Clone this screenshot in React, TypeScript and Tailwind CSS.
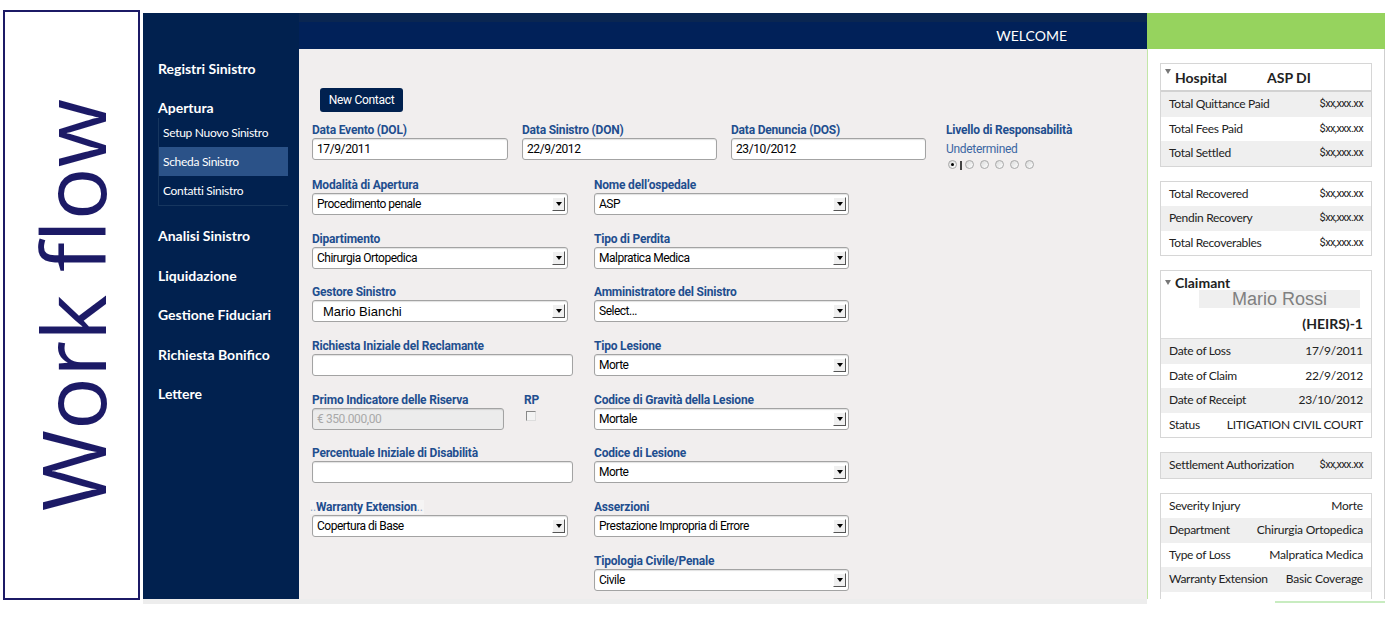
import React from 'react';

const narrow = { fontFamily: 'Roboto, "Liberation Sans", sans-serif' };
const ui = { fontFamily: 'Lato, "Noto Sans", sans-serif' };
const arial = { fontFamily: '"Liberation Sans", Arial, sans-serif' };

const Arrow = () => (
  <span className="flex h-[14px] w-[13px] shrink-0 items-center justify-center border border-t-white border-l-white border-r-[#555] border-b-[#555] bg-[#f0f0f0]">
    <span className="h-0 w-0 border-x-[3px] border-t-[4px] border-x-transparent border-t-black" />
  </span>
);

const Label = ({ children, className = '' }: { children: React.ReactNode; className?: string }) => (
  <div
    className={'h-[14px] text-[12px] font-bold leading-[14px] tracking-[-0.2px] text-[#1f4e8f] whitespace-nowrap ' + className}
    style={narrow}
  >
    {children}
  </div>
);

const TextBox = ({ value = '', width, disabled = false }: { value?: string; width: number; disabled?: boolean }) => (
  <div
    className={
      'mt-[1px] flex h-[22px] items-center rounded-[3px] border border-[#a3a3a3] pl-[4px] text-[12px] tracking-[-0.4px] shadow-[inset_0_1px_1px_rgba(0,0,0,0.12)] ' +
      (disabled ? 'bg-[#ececec] text-[#a9a9a9]' : 'bg-white text-black')
    }
    style={{ ...narrow, width }}
  >
    {value}
  </div>
);

const Select = ({ value, wide = false, plain = false }: { value: string; wide?: boolean; plain?: boolean }) => (
  <div
    className={
      'mt-[1px] flex h-[22px] items-center justify-between rounded-[3px] border border-[#a3a3a3] bg-white pr-[2px] text-black shadow-[inset_0_1px_1px_rgba(0,0,0,0.12)] ' +
      (wide ? 'w-[256px]' : 'w-[255px]')
    }
  >
    {plain ? (
      <span className="pl-[10px] text-[13px]" style={arial}>{value}</span>
    ) : (
      <span className="pl-[4px] text-[12px] tracking-[-0.5px]" style={narrow}>{value}</span>
    )}
    <Arrow />
  </div>
);

const Radio = ({ on = false }: { on?: boolean }) => (
  <span className="flex h-[9px] w-[9px] items-center justify-center rounded-full border border-[#a8a8a8] bg-gradient-to-br from-[#d9d9d9] to-white">
    {on && <span className="h-[3px] w-[3px] rounded-full bg-black" />}
  </span>
);

const Row = ({ l, v, grey = false, narrowVal = false }: { l: string; v: string; grey?: boolean; narrowVal?: boolean }) => (
  <div className={'flex h-[24.5px] items-center justify-between pl-[8px] pr-[8px] text-[12px] text-[#222] ' + (grey ? 'bg-[#efefef]' : 'bg-white')}>
    <span className="tracking-[-0.3px]" style={ui}>{l}</span>
    {narrowVal ? (
      <span className="text-[11px] tracking-[-0.6px]" style={narrow}>{v}</span>
    ) : (
      <span className="tracking-[-0.2px]" style={ui}>{v}</span>
    )}
  </div>
);

const Tri = () => <span className="mr-[4px] h-0 w-0 self-start mt-[5px] border-x-[3px] border-t-[5px] border-x-transparent border-t-[#777]" />;

const money = '$xx,xxx.xx';

const NavItem = ({ children }: { children: React.ReactNode }) => (
  <div className="h-[20px] text-[14px] font-bold leading-[20px] text-white" style={ui}>{children}</div>
);

export default function App() {
  return (
    <div className="flex h-[624px] w-[1393px] items-start overflow-hidden bg-white">
      {/* Work flow box */}
      <div className="ml-[3px] mt-[10px] flex h-[590px] w-[137px] items-center justify-center border-2 border-[#1c1a66]">
        <span
          className="rotate-180 whitespace-nowrap text-[88px] leading-none text-[#1c1a66] [writing-mode:vertical-rl]"
          style={{ fontFamily: '"Open Sans", sans-serif' }}
        >
          Work flow
        </span>
      </div>

      {/* App */}
      <div className="ml-[3px] mt-[13px] flex flex-col">
        <div className="flex h-[586px] w-[1242px]">
          {/* Sidebar */}
          <div className="flex w-[156px] flex-col bg-[#01214f] pl-[15px] pt-[46px]">
            <NavItem>Registri Sinistro</NavItem>
            <div className="mt-[19px]">
              <NavItem>Apertura</NavItem>
            </div>
            <div className="w-[130px] border-b border-l border-[#16365f] text-[12px] tracking-[-0.3px] text-white" style={ui}>
              <div className="flex h-[29px] items-center pl-[4px]">Setup Nuovo Sinistro</div>
              <div className="flex h-[29px] items-center bg-[#2b5288] pl-[4px]">Scheda Sinistro</div>
              <div className="flex h-[29px] items-center pl-[4px]">Contatti Sinistro</div>
            </div>
            <div className="mt-[20px] flex flex-col gap-[19.6px]">
              <NavItem>Analisi Sinistro</NavItem>
              <NavItem>Liquidazione</NavItem>
              <NavItem>Gestione Fiduciari</NavItem>
              <NavItem>Richiesta Bonifico</NavItem>
              <NavItem>Lettere</NavItem>
            </div>
          </div>

          {/* Center */}
          <div className="flex w-[848px] flex-col">
            <div className="flex h-[36px] shrink-0 items-center justify-end border-t-[9px] border-[#0a2651] bg-[#012159] pr-[80px]">
              <span className="mt-[-1px] text-[14px] text-white" style={ui}>WELCOME</span>
            </div>
            <div className="flex-1 bg-[#f1eeee] pl-[13px] pt-[37px]">
              <button
                className="ml-[8px] h-[24px] w-[83px] rounded-[3px] bg-[#01214f] text-[12px] tracking-[-0.3px] text-white"
                style={narrow}
              >
                New Contact
              </button>

              {/* Row 1 */}
              <div className="mt-[11px] flex h-[37px]">
                <div>
                  <Label>Data Evento (DOL)</Label>
                  <TextBox value="17/9/2011" width={196} />
                </div>
                <div className="ml-[14px]">
                  <Label>Data Sinistro (DON)</Label>
                  <TextBox value="22/9/2012" width={195} />
                </div>
                <div className="ml-[14px]">
                  <Label>Data Denuncia (DOS)</Label>
                  <TextBox value="23/10/2012" width={195} />
                </div>
                <div className="ml-[20px]">
                  <Label>Livello di Responsabilità</Label>
                  <div className="mt-[5px] text-[12px] leading-[14px] tracking-[-0.3px] text-[#3b66a3]" style={narrow}>
                    Undetermined
                  </div>
                  <div className="ml-[2px] mt-[3px] flex items-center">
                    <Radio on />
                    <span className="ml-[3px] mt-[2px] h-[9px] w-[2px] bg-[#444]" />
                    <span className="ml-[3px] flex gap-[6px]">
                      <Radio />
                      <Radio />
                      <Radio />
                      <Radio />
                      <Radio />
                    </span>
                  </div>
                </div>
              </div>

              {/* Two-column grid */}
              <div className="mt-[18px] flex flex-col gap-[16.7px]">
                <div className="flex">
                  <div className="w-[282px]">
                    <Label>Modalità di Apertura</Label>
                    <Select value="Procedimento penale" wide />
                  </div>
                  <div>
                    <Label>Nome dell’ospedale</Label>
                    <Select value="ASP" />
                  </div>
                </div>
                <div className="flex">
                  <div className="w-[282px]">
                    <Label>Dipartimento</Label>
                    <Select value="Chirurgia Ortopedica" wide />
                  </div>
                  <div>
                    <Label>Tipo di Perdita</Label>
                    <Select value="Malpratica Medica" />
                  </div>
                </div>
                <div className="flex">
                  <div className="w-[282px]">
                    <Label>Gestore Sinistro</Label>
                    <Select value="Mario Bianchi" wide plain />
                  </div>
                  <div>
                    <Label>Amministratore del Sinistro</Label>
                    <Select value="Select..." />
                  </div>
                </div>
                <div className="flex">
                  <div className="w-[282px]">
                    <Label>Richiesta Iniziale del Reclamante</Label>
                    <TextBox width={261} />
                  </div>
                  <div>
                    <Label>Tipo Lesione</Label>
                    <Select value="Morte" />
                  </div>
                </div>
                <div className="flex">
                  <div className="flex w-[282px]">
                    <div>
                      <Label>Primo Indicatore delle Riserva</Label>
                      <TextBox value="€ 350.000,00" width={192} disabled />
                    </div>
                    <div className="ml-[20px]">
                      <Label>RP</Label>
                      <div className="ml-[2px] mt-[4px] h-[10px] w-[10px] border border-t-[#888] border-l-[#888] border-r-[#ddd] border-b-[#ddd] bg-[#f3f3f3]" />
                    </div>
                  </div>
                  <div>
                    <Label>Codice di Gravità della Lesione</Label>
                    <Select value="Mortale" />
                  </div>
                </div>
                <div className="flex">
                  <div className="w-[282px]">
                    <Label>Percentuale Iniziale di Disabilità</Label>
                    <TextBox width={261} />
                  </div>
                  <div>
                    <Label>Codice di Lesione</Label>
                    <Select value="Morte" />
                  </div>
                </div>
                <div className="flex">
                  <div className="w-[282px]">
                    <Label className="ml-[-2px] w-[114px] bg-[#f5f4f4]">
                      <span className="font-normal text-[#8ea3c4]">..</span>Warranty Extension<span className="font-normal text-[#8ea3c4]">..</span>
                    </Label>
                    <Select value="Copertura di Base" wide />
                  </div>
                  <div>
                    <Label>Asserzioni</Label>
                    <Select value="Prestazione Impropria di Errore" />
                  </div>
                </div>
                <div className="flex">
                  <div className="w-[282px]" />
                  <div>
                    <Label>Tipologia Civile/Penale</Label>
                    <Select value="Civile" />
                  </div>
                </div>
              </div>
            </div>
          </div>

          {/* Right panel */}
          <div className="flex w-[238px] flex-col">
            <div className="h-[36px] shrink-0 bg-[#96d35e]" />
            <div className="h-[554px] overflow-hidden border-l border-r border-l-[#c3e6a8] border-r-[#cfcfcf] bg-white pl-[12px] pr-[12px] pt-[14px]">
              <div className="flex flex-col gap-[14px]">
                <div className="border border-[#d6d6d6]">
                  <div className="flex h-[28px] items-center border-b-2 border-[#d2d2d2] pl-[4px] text-[14px] font-bold text-[#222]" style={ui}>
                    <Tri />
                    <span className="w-[92px]">Hospital</span>
                    <span>ASP DI</span>
                  </div>
                  <Row l="Total Quittance Paid" v={money} grey narrowVal />
                  <Row l="Total Fees Paid" v={money} narrowVal />
                  <Row l="Total Settled" v={money} grey narrowVal />
                </div>
                <div className="border border-[#d6d6d6]">
                  <Row l="Total Recovered" v={money} narrowVal />
                  <Row l="Pendin Recovery" v={money} grey narrowVal />
                  <Row l="Total Recoverables" v={money} narrowVal />
                </div>
                <div className="border border-[#d6d6d6]">
                  <div className="flex h-[19px] items-center pl-[4px] pt-[4px] text-[14px] font-bold leading-[16px] text-[#222]" style={ui}>
                    <Tri />
                    <span>Claimant</span>
                  </div>
                  <div className="ml-[38px] mr-[11px] flex h-[18px] items-center justify-center bg-[#efefef] text-[18px] text-[#808080]" style={arial}>
                    Mario Rossi
                  </div>
                  <div className="flex h-[31px] items-center justify-end border-b border-[#dcdcdc] pr-[8px] text-[14px] font-bold text-[#222]" style={ui}>
                    (HEIRS)-1
                  </div>
                  <Row l="Date of Loss" v="17/9/2011" grey />
                  <Row l="Date of Claim" v="22/9/2012" />
                  <Row l="Date of Receipt" v="23/10/2012" grey />
                  <Row l="Status" v="LITIGATION CIVIL COURT" />
                </div>
                <div className="border border-[#d6d6d6]">
                  <Row l="Settlement Authorization" v={money} grey narrowVal />
                </div>
                <div className="border border-[#d6d6d6]">
                  <Row l="Severity Injury" v="Morte" />
                  <Row l="Department" v="Chirurgia Ortopedica" grey />
                  <Row l="Type of Loss" v="Malpratica Medica" />
                  <Row l="Warranty Extension" v="Basic Coverage" grey />
                  <Row l="Date" v="" />
                </div>
              </div>
            </div>
          </div>
        </div>
        <div className="flex">
          <div className="h-[5px] w-[1004px] bg-[#ededed]" />
          <div className="ml-[128px] mt-[2px] h-[2px] w-[110px] bg-[#c8ecc0]" />
        </div>
      </div>
    </div>
  );
}
